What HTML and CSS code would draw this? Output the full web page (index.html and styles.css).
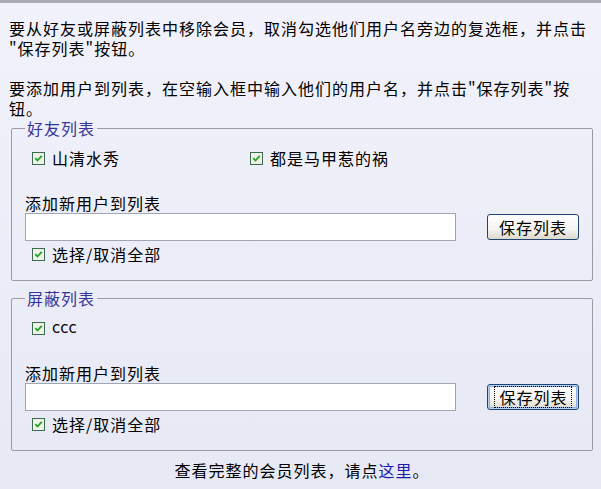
FILE: index.html
```html
<!DOCTYPE html>
<html lang="zh-CN">
<head>
<meta charset="utf-8">
<title>好友列表</title>
<link rel="stylesheet" href="styles.css">
</head>
<body>
<div class="page">
  <p class="intro">要从好友或屏蔽列表中移除会员，取消勾选他们用户名旁边的复选框，并点击<wbr>"保存列表"按钮。</p>
  <p class="intro">要添加用户到列表，在空输入框中输入他们的用户名，并点击"保存列表"按钮。</p>

  <fieldset class="list">
    <legend class="list-title">好友列表</legend>
    <div class="members">
      <label class="check"><svg class="box" viewBox="0 0 13 13"><rect x="0.5" y="0.5" width="12" height="12" fill="#eef2e8" stroke="#3d6a4c"/><path d="M3.3 6.2l2.2 2.3 4.2-4.6" fill="none" stroke="#21a321" stroke-width="1.8"/></svg><span>山清水秀</span></label>
      <label class="check"><svg class="box" viewBox="0 0 13 13"><rect x="0.5" y="0.5" width="12" height="12" fill="#eef2e8" stroke="#3d6a4c"/><path d="M3.3 6.2l2.2 2.3 4.2-4.6" fill="none" stroke="#21a321" stroke-width="1.8"/></svg><span>都是马甲惹的祸</span></label>
    </div>
    <div class="add-label">添加新用户到列表</div>
    <div class="add-row">
      <input class="text-input" type="text">
      <button class="save" type="button">保存列表</button>
    </div>
    <label class="check select-all"><svg class="box" viewBox="0 0 13 13"><rect x="0.5" y="0.5" width="12" height="12" fill="#eef2e8" stroke="#3d6a4c"/><path d="M3.3 6.2l2.2 2.3 4.2-4.6" fill="none" stroke="#21a321" stroke-width="1.8"/></svg><span>选择/取消全部</span></label>
  </fieldset>

  <fieldset class="list list-second">
    <legend class="list-title">屏蔽列表</legend>
    <div class="members">
      <label class="check"><svg class="box" viewBox="0 0 13 13"><rect x="0.5" y="0.5" width="12" height="12" fill="#eef2e8" stroke="#3d6a4c"/><path d="M3.3 6.2l2.2 2.3 4.2-4.6" fill="none" stroke="#21a321" stroke-width="1.8"/></svg><span class="latin">ccc</span></label>
    </div>
    <div class="add-label">添加新用户到列表</div>
    <div class="add-row">
      <input class="text-input" type="text">
      <button class="save save-focus" type="button"><span class="focus-ring">保存列表</span></button>
    </div>
    <label class="check select-all"><svg class="box" viewBox="0 0 13 13"><rect x="0.5" y="0.5" width="12" height="12" fill="#eef2e8" stroke="#3d6a4c"/><path d="M3.3 6.2l2.2 2.3 4.2-4.6" fill="none" stroke="#21a321" stroke-width="1.8"/></svg><span>选择/取消全部</span></label>
  </fieldset>

  <p class="footer">查看完整的会员列表，请点<a class="link" href="#">这里</a>。</p>
</div>
</body>
</html>
```

FILE: styles.css
```css
html, body {
  margin: 0;
  padding: 0;
}

body {
  background: #eceef8;
  font-family: "Noto Sans CJK SC", "Noto Sans", sans-serif;
  font-size: 16px;
  line-height: 20px;
  letter-spacing: 1px;
  color: #000;
}

.page {
  min-height: 486px;
  border-top: 3px solid #a9abb5;
  padding: 15px 6px 0 9px;
  background: linear-gradient(#f1f2fb, #e6e8f4);
}

.intro {
  margin: 0;
}

.intro + .intro {
  margin-top: 20px;
}

.list {
  margin: 0 2px;
  padding: 10px 13px 16px;
  border: 1px solid #9b9b9f;
  border-radius: 2px;
}

.list-second {
  margin-top: 7px;
}

.list-title {
  padding: 0 2px;
  color: #35359c;
}

.members {
  display: grid;
  grid-template-columns: 218px 218px;
  height: 20px;
}

.check {
  display: flex;
  align-items: center;
  height: 20px;
  padding-left: 7px;
}

.box {
  width: 13px;
  height: 13px;
  flex: none;
  margin-right: 7px;
}

.latin {
  font-family: "DejaVu Sans", sans-serif;
  font-size: 15px;
  letter-spacing: 0;
}

.add-label {
  margin-top: 25px;
  height: 20px;
  line-height: 20px;
}

.add-row {
  display: flex;
  align-items: center;
  gap: 31px;
}

.text-input {
  box-sizing: border-box;
  width: 431px;
  height: 28px;
  margin: 0;
  border: 1px solid #9ea7b3;
  background: #fff;
  padding: 0 3px;
}

.save {
  box-sizing: border-box;
  width: 92px;
  height: 26px;
  margin: 0;
  padding: 0;
  border: 1px solid #1f4474;
  border-radius: 3px;
  background: linear-gradient(#ffffff, #f4f3ee 60%, #dcd8cc);
  font-family: "Noto Sans CJK SC", "Noto Sans", sans-serif;
  font-size: 16px;
  letter-spacing: 1px;
  line-height: 20px;
  color: #000;
  display: flex;
  align-items: center;
  justify-content: center;
}

.save-focus {
  box-shadow: inset 0 0 0 1px #b9d1f1, inset 0 0 0 2px #8fb0dd;
}

.focus-ring {
  display: block;
  padding: 0 3px 0 4px;
  outline: 1px dotted #000;
  outline-offset: 0;
}

.select-all {
  margin-top: 3px;
}

.footer {
  margin: 9px 0 0;
  text-align: center;
}

.link {
  color: #1b1bb0;
  text-decoration: none;
}
```
